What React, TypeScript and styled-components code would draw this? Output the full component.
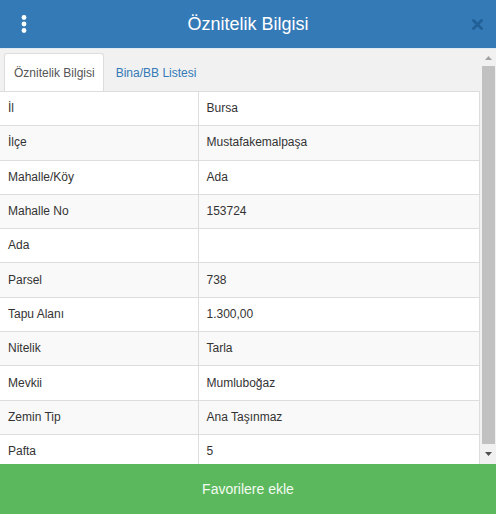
import React from "react";
import styled, { createGlobalStyle } from "styled-components";

const Global = createGlobalStyle`
  html, body { margin: 0; padding: 0; }
  body { font-family: "Liberation Sans", Arial, sans-serif; background: #fff; }
`;

const Window = styled.div`
  width: 496px;
  height: 514px;
  display: flex;
  flex-direction: column;
  overflow: hidden;
`;

const Header = styled.div`
  height: 48px;
  flex: none;
  background: #337ab7;
  border-bottom: 1px solid #dfe9f3;
  display: flex;
  align-items: center;
  justify-content: space-between;
  padding: 0 13px 0 18px;
`;

const Title = styled.div`
  color: #fff;
  font-size: 18px;
  flex: 1;
  text-align: center;
  padding-right: 5px;
`;

const IconBox = styled.div`
  width: 12px;
  display: flex;
  align-items: center;
  justify-content: center;
`;

const Body = styled.div`
  flex: 1;
  min-height: 0;
  display: flex;
  background: #f1f1f1;
`;

const Content = styled.div`
  width: 481px;
  flex: none;
  overflow: hidden;
  display: flex;
  flex-direction: column;
`;

const TabBar = styled.div`
  height: 42px;
  flex: none;
  display: flex;
  align-items: flex-end;
  padding-left: 4px;
  gap: 2px;
`;

const Tab = styled.div<{ $active?: boolean }>`
  height: 38px;
  box-sizing: border-box;
  padding: 0 8px 0 9px;
  display: flex;
  align-items: center;
  font-size: 12px;
  color: ${(p) => (p.$active ? "#555" : "#337ab7")};
  background: ${(p) => (p.$active ? "#fff" : "transparent")};
  border: 1px solid ${(p) => (p.$active ? "#ddd" : "transparent")};
  border-bottom: none;
  border-radius: 3px 3px 0 0;
`;

const Table = styled.table`
  width: 480px;
  border-collapse: collapse;
  border-right: 1px solid #ddd;
  font-size: 12px;
  color: #333;
`;

const Row = styled.tr<{ $striped?: boolean }>`
  background: ${(p) => (p.$striped ? "#f9f9f9" : "#fff")};
`;

const Cell = styled.td<{ $key?: boolean }>`
  height: 34.3px;
  box-sizing: border-box;
  padding: 0 8px;
  border-top: 1px solid #ddd;
  width: ${(p) => (p.$key ? "198px" : "auto")};
  border-right: ${(p) => (p.$key ? "1px solid #ddd" : "none")};
  line-height: 17px;
  vertical-align: middle;
`;

const ScrollBar = styled.div`
  width: 15px;
  flex: none;
  display: flex;
  flex-direction: column;
  background: #f1f1f1;
`;

const ScrollButton = styled.div<{ $h: number }>`
  height: ${(p) => p.$h}px;
  flex: none;
  display: flex;
  align-items: center;
  justify-content: center;
`;

const Thumb = styled.div`
  flex: 1;
  margin: 0 1px 0 1px;
  background: #c1c1c1;
`;

const Footer = styled.button`
  height: 50px;
  flex: none;
  border: none;
  background: #5cb85c;
  color: #f2fbf2;
  font-family: "Liberation Sans", Arial, sans-serif;
  font-size: 14px;
  width: 100%;
  padding: 0;
`;

const rows: [string, string][] = [
  ["İl", "Bursa"],
  ["İlçe", "Mustafakemalpaşa"],
  ["Mahalle/Köy", "Ada"],
  ["Mahalle No", "153724"],
  ["Ada", ""],
  ["Parsel", "738"],
  ["Tapu Alanı", "1.300,00"],
  ["Nitelik", "Tarla"],
  ["Mevkii", "Mumluboğaz"],
  ["Zemin Tip", "Ana Taşınmaz"],
  ["Pafta", "5"],
];

export default function App() {
  return (
    <Window>
      <Global />
      <Header>
        <IconBox>
          <svg width="6" height="18" viewBox="0 0 6 18">
            <circle cx="3" cy="2.5" r="2.4" fill="#fff" />
            <circle cx="3" cy="9" r="2.4" fill="#fff" />
            <circle cx="3" cy="15.5" r="2.4" fill="#fff" />
          </svg>
        </IconBox>
        <Title>Öznitelik Bilgisi</Title>
        <IconBox>
          <svg width="11" height="11" viewBox="0 0 11 11">
            <path d="M1.5 1.5 L9.5 9.5 M9.5 1.5 L1.5 9.5" stroke="#1d5a8f" strokeWidth="2.8" strokeLinecap="round" opacity="0.8" />
          </svg>
        </IconBox>
      </Header>
      <Body>
        <Content>
          <TabBar>
            <Tab $active>Öznitelik Bilgisi</Tab>
            <Tab>Bina/BB Listesi</Tab>
          </TabBar>
          <Table>
            <tbody>
              {rows.map(([k, v], i) => (
                <Row key={k} $striped={i % 2 === 1}>
                  <Cell $key>{k}</Cell>
                  <Cell>{v}</Cell>
                </Row>
              ))}
            </tbody>
          </Table>
        </Content>
        <ScrollBar>
          <ScrollButton $h={17}>
            <svg width="7" height="4" viewBox="0 0 7 4">
              <path d="M0 4 L3.5 0 L7 4 Z" fill="#a3a3a3" />
            </svg>
          </ScrollButton>
          <Thumb />
          <ScrollButton $h={20}>
            <svg width="7" height="4" viewBox="0 0 7 4">
              <path d="M0 0 L3.5 4 L7 0 Z" fill="#505050" />
            </svg>
          </ScrollButton>
        </ScrollBar>
      </Body>
      <Footer>Favorilere ekle</Footer>
    </Window>
  );
}
